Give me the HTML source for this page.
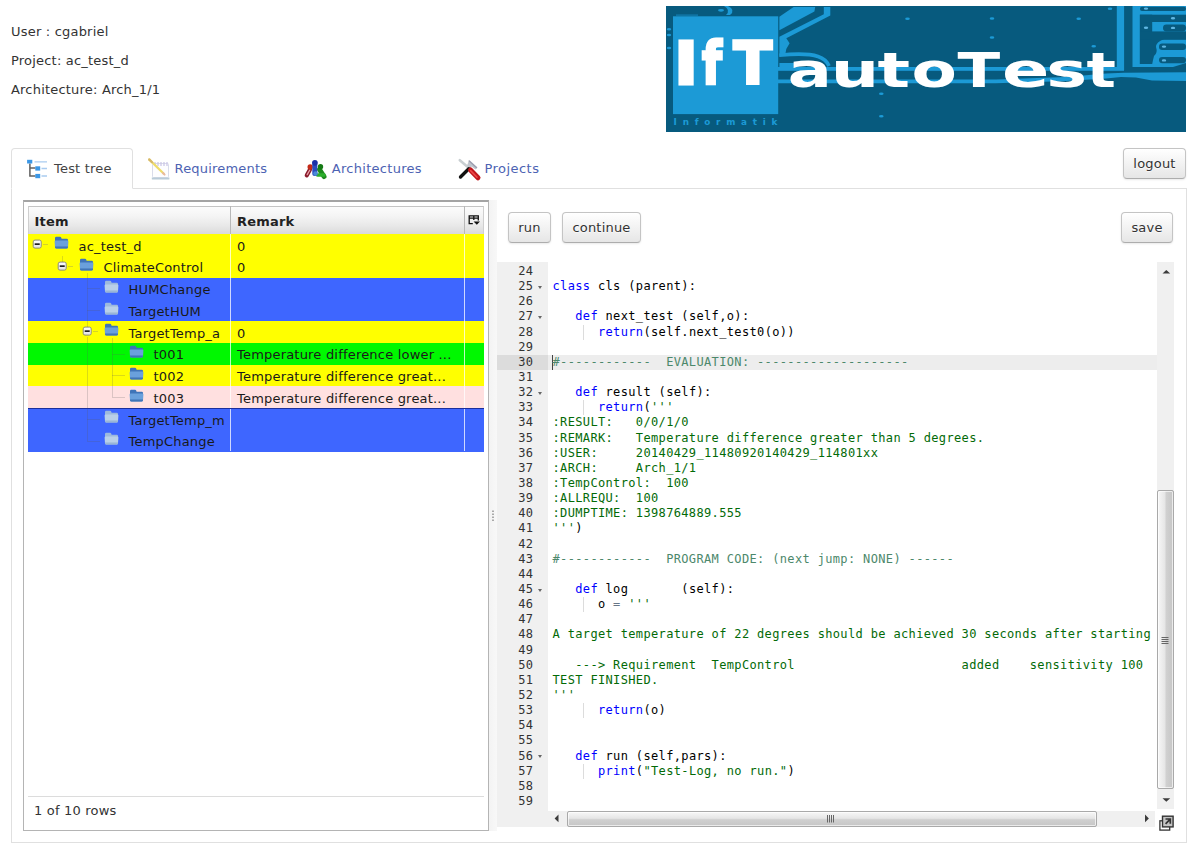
<!DOCTYPE html>
<html lang="en">
<head>
<meta charset="utf-8">
<title>IfT autoTest</title>
<style>
html,body{margin:0;padding:0;background:#fff;}
body{width:1200px;height:859px;position:relative;overflow:hidden;font-family:'DejaVu Sans', 'Liberation Sans', sans-serif;font-size:13px;letter-spacing:.2px;color:#333;}
.abs{position:absolute;}
.info{position:absolute;left:11px;white-space:nowrap;line-height:16px;color:#333;}
/* buttons */
.btn{position:absolute;box-sizing:border-box;border:1px solid #c4c4c4;border-bottom-color:#adadad;border-radius:4px;
 background:linear-gradient(#ffffff,#e6e6e6);color:#333;text-align:center;white-space:nowrap;
 box-shadow:inset 0 1px 0 rgba(255,255,255,.2),0 1px 2px rgba(0,0,0,.09);text-shadow:0 1px 1px rgba(255,255,255,.75);}
/* tabs */
.tabline{position:absolute;left:11px;top:188px;width:1176px;height:655px;box-sizing:border-box;border:1px solid #e0e0e0;}
.tab{position:absolute;top:148px;height:41px;box-sizing:border-box;white-space:nowrap;color:#4d63b3;line-height:16px;}
.tab.active{left:11px;width:122px;border:1px solid #e0e0e0;border-bottom:1px solid #fff;border-radius:4px 4px 0 0;background:#fff;color:#444;}
.tab span{position:absolute;top:12px;}
/* tree */
.treebox{position:absolute;left:23px;top:200px;width:466px;height:631px;box-sizing:border-box;border:1px solid #b4b4b4;border-top:2px solid #a4a4a4;background:#fff;}
.thead{position:absolute;left:28px;top:206px;width:456px;height:28px;background:linear-gradient(#fcfcfc 0%,#f4f4f4 35%,#e8e8e8 70%,#dadada 100%);border-top:1px solid #c4c4c4;border-left:1px solid #cfcfcf;border-right:1px solid #cfcfcf;box-sizing:border-box;}
.thead b{position:absolute;top:7px;font-weight:bold;color:#222;line-height:16px;}
.thsep{position:absolute;top:206px;width:1px;height:28px;background:#b8b8b8;}
.row{position:absolute;left:28px;width:456px;height:21.8px;}
.row .t{position:absolute;top:4.5px;line-height:16px;color:#1a1a1a;white-space:nowrap;}
.row .r{position:absolute;left:209px;top:4.5px;line-height:16px;color:#1a1a1a;white-space:nowrap;}
.vsep{position:absolute;top:234px;width:1px;height:217px;background:rgba(255,255,255,.75);}
.yl{background:#ffff00}.bl{background:#3e66ff}.gr{background:#00f800}.pk{background:#ffe0e0}
.fold{position:absolute;width:15px;height:13px;}
.status{position:absolute;left:28px;top:796px;width:456px;height:1px;background:#dcdcdc;}
/* splitter */
.split{position:absolute;left:489px;top:200px;width:8px;height:631px;background:linear-gradient(90deg,#f3f3f3,#f8f8f8);}
/* ace */
.gutter{position:absolute;left:497px;top:262px;width:51px;height:565px;background:#f0f0f0;overflow:hidden;}
.gn{position:absolute;left:0;width:36.3px;height:15.143px;line-height:15.143px;text-align:right;color:#333;font-family:'DejaVu Sans Mono', 'Liberation Mono', monospace;font-size:12px;letter-spacing:.351px;white-space:pre;padding-right:14.7px;}
.gn.act{background:#dcdcdc;}
.fd{position:absolute;left:41px;top:6.5px;width:0;height:0;border-left:2.5px solid transparent;border-right:2.5px solid transparent;border-top:3px solid #666;}
.code{position:absolute;left:548px;top:262px;width:609px;height:549px;background:#fff;overflow:hidden;font-family:'DejaVu Sans Mono', 'Liberation Mono', monospace;font-size:12px;letter-spacing:.351px;color:#000;}
.ln{position:absolute;left:4.5px;height:15.143px;line-height:15.143px;white-space:pre;}
.actl{position:absolute;left:0;width:609px;height:15.143px;background:#ededed;}
.ig{position:absolute;left:34.5px;width:1px;height:15.143px;background:#dcdcdc;}
.k{color:#0000ff}.s{color:#036a07}.c{color:#4c886b}.o{color:#687687}
</style>
</head>
<body>
<div class="info" style="top:24px">User : cgabriel</div>
<div class="info" style="top:53px">Project: ac_test_d</div>
<div class="info" style="top:82px">Architecture: Arch_1/1</div>

<!-- banner -->
<svg class="abs" style="left:666px;top:6px" width="520" height="126" viewBox="0 0 520 126">
<rect width="520" height="126" fill="#075a7e"/>
<path d="M62 0 Q70 4 64 9 L60 9 Q65 4 58 0 Z" fill="#1c9ad6"/>
<ellipse cx="55" cy="4.300" rx="3" ry="1.400" fill="#1c9ad6"/>
<rect x="10" y="8.500" width="22" height="1.200" fill="#1c9ad6" opacity=".6"/>
<ellipse cx="3" cy="23.3" rx="2.200" ry="1.300" fill="#1c9ad6"/>
<ellipse cx="3" cy="29" rx="2.200" ry="1.300" fill="#1c9ad6"/>
<ellipse cx="3" cy="42" rx="2.200" ry="1.300" fill="#1c9ad6"/>
<path d="M113.400 10.700 L127.600 0.900 H149.200 L148.400 5.400 L113.400 24.200 Z" fill="#1c9ad6"/>
<path d="M113.400 30.700 L157.800 8.300 V0.900 H164.300 V9.500 L120.300 32.300 L123.600 37.200 L120.300 42.900 L119.500 47.200 L113.400 51 Z" fill="#1c9ad6"/>
<path d="M113.400 49.300 Q140 46.500 152 50.500 Q160 53 163 60" fill="none" stroke="#1c9ad6" stroke-width="3.600"/>
<rect x="113.400" y="57" width="16" height="6" fill="#1c9ad6"/>
<rect x="112" y="61" width="346" height="3.800" fill="#1c9ad6"/>
<path d="M112 73.600 H330 L400 71 L440 67.500 L458 66.800 L520 66.300 V75 L486 74.600 L470 71.500 L455 71 L440 72.500 L400 75 L330 77.300 H112 Z" fill="#1c9ad6"/>
<ellipse cx="215.3" cy="87.7" rx="2.300" ry="1.200" fill="#1c9ad6"/>
<ellipse cx="215.3" cy="110.3" rx="2.300" ry="1.200" fill="#1c9ad6"/>
<ellipse cx="241.5" cy="12.7" rx="2.300" ry="1.200" fill="#1c9ad6"/>
<ellipse cx="326" cy="12.5" rx="2.300" ry="1.200" fill="#1c9ad6"/>
<ellipse cx="412.7" cy="12.7" rx="2.300" ry="1.200" fill="#1c9ad6"/>
<ellipse cx="326" cy="31.5" rx="2.300" ry="1.200" fill="#1c9ad6"/>
<ellipse cx="427.7" cy="40.2" rx="2.300" ry="1.200" fill="#1c9ad6"/>
<ellipse cx="444" cy="2.7" rx="2.300" ry="1.200" fill="#1c9ad6"/>
<rect x="450.800" y="0" width="7.300" height="64" fill="#1c9ad6"/>
<path d="M466.500 0 H520 V57 L507 61 H466.500 Z" fill="#1c9ad6"/>
<rect x="473.800" y="8.700" width="12.400" height="49.300" fill="#075a7e"/>
<rect x="474" y="0.800" width="46" height="4.200" rx="2" fill="#075a7e"/>
<rect x="474" y="8.700" width="46" height="7.300" fill="#075a7e"/>
<circle cx="480" cy="21.700" r="5.800" fill="#075a7e"/>
<rect x="497" y="18.600" width="23" height="6.800" rx="3.400" fill="#075a7e"/>
<rect x="474" y="25.400" width="46" height="8.400" fill="#075a7e"/>
<path d="M486 33 H498 Q490 36 490 41 Q492 47 488 50 L486 58 Z" fill="#075a7e"/>
<rect x="493" y="37.600" width="27" height="6.400" rx="3.200" fill="#075a7e"/>
<rect x="493" y="51" width="27" height="6.200" rx="3.100" fill="#075a7e"/>
<ellipse cx="480" cy="21.7" rx="2.200" ry="1.200" fill="#5fb6e2"/>
<ellipse cx="507" cy="12.3" rx="2.200" ry="1.200" fill="#5fb6e2"/>
<ellipse cx="507" cy="21.9" rx="2.200" ry="1.200" fill="#5fb6e2"/>
<ellipse cx="498" cy="40.6" rx="2.200" ry="1.200" fill="#5fb6e2"/>
<ellipse cx="498" cy="54.4" rx="2.200" ry="1.200" fill="#5fb6e2"/>
<ellipse cx="480" cy="2.6" rx="2.200" ry="1.200" fill="#5fb6e2"/>
<rect x="7" y="10.300" width="105.200" height="97.800" fill="#1c9ad6"/>
<g font-family="'DejaVu Sans','Liberation Sans',sans-serif" font-weight="bold" fill="#fff">
<text transform="matrix(1 0 0 0.5861 0 78.43)" y="0" font-size="100" stroke="#fff" stroke-width="5"><tspan x="8.23" textLength="23.79" lengthAdjust="spacingAndGlyphs">I</tspan><tspan x="36.06" textLength="19.94" lengthAdjust="spacingAndGlyphs">f</tspan><tspan x="67.63" textLength="38.66" lengthAdjust="spacingAndGlyphs">T</tspan></text>
<text transform="matrix(1 0 0 0.4874 0 80.58)" y="0" font-size="100"><tspan x="121.88" textLength="44.23" lengthAdjust="spacingAndGlyphs">a</tspan><tspan x="164.75" textLength="48.55" lengthAdjust="spacingAndGlyphs">u</tspan><tspan x="211.52" textLength="32.72" lengthAdjust="spacingAndGlyphs">t</tspan><tspan x="245.55" textLength="45.57" lengthAdjust="spacingAndGlyphs">o</tspan><tspan x="291.50" textLength="42.84" lengthAdjust="spacingAndGlyphs">T</tspan><tspan x="335.90" textLength="47.48" lengthAdjust="spacingAndGlyphs">e</tspan><tspan x="380.25" textLength="41.08" lengthAdjust="spacingAndGlyphs">s</tspan><tspan x="420.58" textLength="29.54" lengthAdjust="spacingAndGlyphs">t</tspan></text>
</g>
<text x="7.600" y="118.700" font-family="'DejaVu Sans','Liberation Sans',sans-serif" font-weight="bold" font-size="8.800" fill="#1c9ad6" textLength="104" lengthAdjust="spacing">Informatik</text>
</svg>

<div class="btn" style="left:1123px;top:148px;width:63px;height:31px;line-height:29px;">logout</div>

<!-- tabs -->
<div class="tabline"></div>
<div class="tab active"><span style="left:42px">Test tree</span></div>
<div class="tab" style="left:134px"><span style="left:40.500px;top:13px">Requirements</span></div>
<div class="tab" style="left:290px"><span style="left:41.700px;top:13px;letter-spacing:.3px">Architectures</span></div>
<div class="tab" style="left:444px"><span style="left:40.500px;top:13px;letter-spacing:.45px">Projects</span></div>


<!-- tab icons -->
<svg class="abs" style="left:26px;top:158px" width="22" height="22" viewBox="0 0 22 22">
<path d="M3.900 5.400 V17.900 H9.500 M3.900 10 H9.500" fill="none" stroke="#606060" stroke-width="1.500"/>
<rect x="1.100" y="1.800" width="5.200" height="3.700" fill="#3b97e6"/>
<rect x="9.300" y="8.300" width="4.900" height="4.300" fill="#3b97e6"/>
<rect x="9.300" y="15.900" width="4.900" height="4.300" fill="#3b97e6"/>
<path d="M8.500 3.800 H21 M15.500 10.500 H21 M15.500 18 H21" stroke="#a9cbf0" stroke-width="1.300"/>
</svg>
<svg class="abs" style="left:146px;top:156px" width="26" height="26" viewBox="0 0 26 26">
<rect x="6.500" y="7.500" width="16" height="14" rx="1" fill="#fdfdff" stroke="#d9dcea" stroke-width="1"/>
<path d="M9 6 V10 M12 6 V10 M15 6 V10 M18 6 V10 M21 6 V10" stroke="#c9c4e4" stroke-width="1.200"/>
<path d="M5.800 21.500 H23.400 V23 Q23.400 23.600 22.800 23.600 H6.400 Q5.800 23.600 5.800 23 Z" fill="#b9cbd8"/>
<path d="M3.400 3.600 L17.800 17.800" stroke="#eedc6a" stroke-width="2.200" stroke-linecap="round"/>
<path d="M3.200 3.400 L6 6.200" stroke="#d6b86a" stroke-width="2.200" stroke-linecap="round"/>
<path d="M17 17 L18.600 18.600" stroke="#e9b9a0" stroke-width="2" stroke-linecap="round"/>
</svg>
<svg class="abs" style="left:302px;top:156px" width="26" height="26" viewBox="0 0 26 26">
<path d="M8 13.500 L4.800 19.300" stroke="#8a1c2c" stroke-width="4.200" stroke-linecap="round"/>
<path d="M7.800 14 L5.200 18.600" stroke="#e8a0a8" stroke-width="1.300" stroke-linecap="round"/>
<circle cx="8.200" cy="11" r="2.700" fill="#c42a18"/>
<path d="M17.500 13.500 L22 20.500" stroke="#1d8a1d" stroke-width="5" stroke-linecap="round"/>
<path d="M15.500 19 H22" stroke="#2cae2c" stroke-width="3.600" stroke-linecap="round"/>
<circle cx="18.500" cy="10.800" r="2.700" fill="#157a15"/>
<path d="M12.800 9 V17.500" stroke="#2a4cc0" stroke-width="5" stroke-linecap="round"/>
<circle cx="12.900" cy="6.800" r="2.900" fill="#1a2fa8"/>
<circle cx="13.500" cy="17.500" r="2.300" fill="#4a8ad8"/>
</svg>
<svg class="abs" style="left:456px;top:156px" width="26" height="26" viewBox="0 0 26 26">
<path d="M3.800 4.200 L13.200 12.200" stroke="#c9cfd2" stroke-width="2.600" stroke-linecap="round"/>
<path d="M13 4.500 L21 12 L19.500 13.500 L15.500 10.500 L13.600 12.300 L11 9.600 Z" fill="#bfc5cd"/>
<path d="M13.300 5 L20.500 11.500" stroke="#9b9fb0" stroke-width="1.600" stroke-linecap="round"/>
<path d="M12.800 12.800 L4.500 21" stroke="#111" stroke-width="3.400" stroke-linecap="round"/>
<path d="M14.500 14 L22 21.800" stroke="#c0161c" stroke-width="5" stroke-linecap="round"/>
<path d="M14.600 14.600 L21 21.200" stroke="#ee4a4a" stroke-width="1.600" stroke-linecap="round"/>
</svg>

<!-- tree -->
<div class="treebox"></div>
<div class="thead"><b style="left:5.500px">Item</b><b style="left:208px">Remark</b></div>
<svg class="abs" style="left:468px;top:214px" width="13" height="13" viewBox="0 0 13 13"><path d="M1.200 1.800 H10.300 M1.200 4.200 H10.300 M1.200 1.200 V9.700 H4.800 M5.800 1.200 V6 M10.300 1.200 V6.500" fill="none" stroke="#111" stroke-width="1.300"/><path d="M5.600 7.600 H12 L8.800 10.800 Z" fill="#111"/></svg>
<div class="thsep" style="left:230px"></div>
<div class="thsep" style="left:464px"></div>
<div class="row yl" style="top:234.00px;height:22.06px"><svg class="abs" style="left:4px;top:5px" width="11" height="11" viewBox="0 0 11 11"><defs><linearGradient id="eg0" x1="0" y1="0" x2="0" y2="1"><stop offset="0" stop-color="#fff"/><stop offset="1" stop-color="#e2e2e2"/></linearGradient></defs><rect x="1.200" y="1.100" width="8" height="8" rx="1.800" fill="url(#eg0)" stroke="#8a8a80" stroke-width="1"/><rect x="2.700" y="4.300" width="5" height="1.700" fill="#222"/></svg><i class="abs" style="left:15px;top:10px;width:5px;height:1px;background:rgba(120,120,120,.3)"></i><svg class="fold" style="left:26px;top:2.3px" viewBox="0 0 15 13"><path d="M1 2.2 Q1 0.8 2.2 0.8 H6 Q7 0.8 7.3 1.8 L7.6 2.8 H12.8 Q14 2.8 14 4 V11 Q14 12.2 12.8 12.2 H2.2 Q1 12.2 1 11 Z" fill="#3f74b8"/><path d="M0.6 5.6 Q0.6 4.6 1.6 4.6 H13.4 Q14.4 4.6 14.4 5.6 L14 11.2 Q14 12.4 12.8 12.4 H2.2 Q1 12.4 1 11.2 Z" fill="#6aa0dc"/><path d="M1 11.3 Q1 12.4 2.2 12.4 H12.8 Q14 12.4 14 11.3 V10.6 H1 Z" fill="#2f62a6" opacity=".7"/></svg><span class="t" style="left:50.5px">ac_test_d</span><span class="r">0</span></div>
<div class="row yl" style="top:255.76px;height:22.06px"><svg class="abs" style="left:29px;top:5px" width="11" height="11" viewBox="0 0 11 11"><defs><linearGradient id="eg1" x1="0" y1="0" x2="0" y2="1"><stop offset="0" stop-color="#fff"/><stop offset="1" stop-color="#e2e2e2"/></linearGradient></defs><rect x="1.200" y="1.100" width="8" height="8" rx="1.800" fill="url(#eg1)" stroke="#8a8a80" stroke-width="1"/><rect x="2.700" y="4.300" width="5" height="1.700" fill="#222"/></svg><i class="abs" style="left:40px;top:10px;width:5px;height:1px;background:rgba(120,120,120,.3)"></i><svg class="fold" style="left:51px;top:2.3px" viewBox="0 0 15 13"><path d="M1 2.2 Q1 0.8 2.2 0.8 H6 Q7 0.8 7.3 1.8 L7.6 2.8 H12.8 Q14 2.8 14 4 V11 Q14 12.2 12.8 12.2 H2.2 Q1 12.2 1 11 Z" fill="#3f74b8"/><path d="M0.6 5.6 Q0.6 4.6 1.6 4.6 H13.4 Q14.4 4.6 14.4 5.6 L14 11.2 Q14 12.4 12.8 12.4 H2.2 Q1 12.4 1 11.2 Z" fill="#6aa0dc"/><path d="M1 11.3 Q1 12.4 2.2 12.4 H12.8 Q14 12.4 14 11.3 V10.6 H1 Z" fill="#2f62a6" opacity=".7"/></svg><span class="t" style="left:75.5px">ClimateControl</span><span class="r">0</span></div>
<div class="row bl" style="top:277.52px;height:22.06px"><svg class="fold" style="left:76px;top:2.3px" viewBox="0 0 15 13"><path d="M1 2.2 Q1 0.8 2.2 0.8 H6 Q7 0.8 7.3 1.8 L7.6 2.8 H12.8 Q14 2.8 14 4 V11 Q14 12.2 12.8 12.2 H2.2 Q1 12.2 1 11 Z" fill="#9db9dc"/><path d="M0.6 5.6 Q0.6 4.6 1.6 4.6 H13.4 Q14.4 4.6 14.4 5.6 L14 11.2 Q14 12.4 12.8 12.4 H2.2 Q1 12.4 1 11.2 Z" fill="#b9cfe8"/><path d="M1 11.3 Q1 12.4 2.2 12.4 H12.8 Q14 12.4 14 11.3 V10.6 H1 Z" fill="#8aa9d0" opacity=".7"/></svg><span class="t" style="left:100.5px">HUMChange</span></div>
<div class="row bl" style="top:299.28px;height:22.06px"><svg class="fold" style="left:76px;top:2.3px" viewBox="0 0 15 13"><path d="M1 2.2 Q1 0.8 2.2 0.8 H6 Q7 0.8 7.3 1.8 L7.6 2.8 H12.8 Q14 2.8 14 4 V11 Q14 12.2 12.8 12.2 H2.2 Q1 12.2 1 11 Z" fill="#9db9dc"/><path d="M0.6 5.6 Q0.6 4.6 1.6 4.6 H13.4 Q14.4 4.6 14.4 5.6 L14 11.2 Q14 12.4 12.8 12.4 H2.2 Q1 12.4 1 11.2 Z" fill="#b9cfe8"/><path d="M1 11.3 Q1 12.4 2.2 12.4 H12.8 Q14 12.4 14 11.3 V10.6 H1 Z" fill="#8aa9d0" opacity=".7"/></svg><span class="t" style="left:100.5px">TargetHUM</span></div>
<div class="row yl" style="top:321.04px;height:22.06px"><svg class="abs" style="left:54px;top:5px" width="11" height="11" viewBox="0 0 11 11"><defs><linearGradient id="eg4" x1="0" y1="0" x2="0" y2="1"><stop offset="0" stop-color="#fff"/><stop offset="1" stop-color="#e2e2e2"/></linearGradient></defs><rect x="1.200" y="1.100" width="8" height="8" rx="1.800" fill="url(#eg4)" stroke="#8a8a80" stroke-width="1"/><rect x="2.700" y="4.300" width="5" height="1.700" fill="#222"/></svg><i class="abs" style="left:65px;top:10px;width:5px;height:1px;background:rgba(120,120,120,.3)"></i><svg class="fold" style="left:76px;top:2.3px" viewBox="0 0 15 13"><path d="M1 2.2 Q1 0.8 2.2 0.8 H6 Q7 0.8 7.3 1.8 L7.6 2.8 H12.8 Q14 2.8 14 4 V11 Q14 12.2 12.8 12.2 H2.2 Q1 12.2 1 11 Z" fill="#3f74b8"/><path d="M0.6 5.6 Q0.6 4.6 1.6 4.6 H13.4 Q14.4 4.6 14.4 5.6 L14 11.2 Q14 12.4 12.8 12.4 H2.2 Q1 12.4 1 11.2 Z" fill="#6aa0dc"/><path d="M1 11.3 Q1 12.4 2.2 12.4 H12.8 Q14 12.4 14 11.3 V10.6 H1 Z" fill="#2f62a6" opacity=".7"/></svg><span class="t" style="left:100.5px">TargetTemp_a</span><span class="r">0</span></div>
<div class="row gr" style="top:342.80px;height:22.06px"><svg class="fold" style="left:101px;top:2.3px" viewBox="0 0 15 13"><path d="M1 2.2 Q1 0.8 2.2 0.8 H6 Q7 0.8 7.3 1.8 L7.6 2.8 H12.8 Q14 2.8 14 4 V11 Q14 12.2 12.8 12.2 H2.2 Q1 12.2 1 11 Z" fill="#3f74b8"/><path d="M0.6 5.6 Q0.6 4.6 1.6 4.6 H13.4 Q14.4 4.6 14.4 5.6 L14 11.2 Q14 12.4 12.8 12.4 H2.2 Q1 12.4 1 11.2 Z" fill="#6aa0dc"/><path d="M1 11.3 Q1 12.4 2.2 12.4 H12.8 Q14 12.4 14 11.3 V10.6 H1 Z" fill="#2f62a6" opacity=".7"/></svg><span class="t" style="left:125.5px">t001</span><span class="r">Temperature difference lower ...</span></div>
<div class="row yl" style="top:364.56px;height:22.06px"><svg class="fold" style="left:101px;top:2.3px" viewBox="0 0 15 13"><path d="M1 2.2 Q1 0.8 2.2 0.8 H6 Q7 0.8 7.3 1.8 L7.6 2.8 H12.8 Q14 2.8 14 4 V11 Q14 12.2 12.8 12.2 H2.2 Q1 12.2 1 11 Z" fill="#3f74b8"/><path d="M0.6 5.6 Q0.6 4.6 1.6 4.6 H13.4 Q14.4 4.6 14.4 5.6 L14 11.2 Q14 12.4 12.8 12.4 H2.2 Q1 12.4 1 11.2 Z" fill="#6aa0dc"/><path d="M1 11.3 Q1 12.4 2.2 12.4 H12.8 Q14 12.4 14 11.3 V10.6 H1 Z" fill="#2f62a6" opacity=".7"/></svg><span class="t" style="left:125.5px">t002</span><span class="r">Temperature difference great...</span></div>
<div class="row pk" style="top:386.32px;height:22.06px"><svg class="fold" style="left:101px;top:2.3px" viewBox="0 0 15 13"><path d="M1 2.2 Q1 0.8 2.2 0.8 H6 Q7 0.8 7.3 1.8 L7.6 2.8 H12.8 Q14 2.8 14 4 V11 Q14 12.2 12.8 12.2 H2.2 Q1 12.2 1 11 Z" fill="#3f74b8"/><path d="M0.6 5.6 Q0.6 4.6 1.6 4.6 H13.4 Q14.4 4.6 14.4 5.6 L14 11.2 Q14 12.4 12.8 12.4 H2.2 Q1 12.4 1 11.2 Z" fill="#6aa0dc"/><path d="M1 11.3 Q1 12.4 2.2 12.4 H12.8 Q14 12.4 14 11.3 V10.6 H1 Z" fill="#2f62a6" opacity=".7"/></svg><span class="t" style="left:125.5px">t003</span><span class="r">Temperature difference great...</span></div>
<div class="row bl" style="top:408.08px;height:22.06px"><svg class="fold" style="left:76px;top:2.3px" viewBox="0 0 15 13"><path d="M1 2.2 Q1 0.8 2.2 0.8 H6 Q7 0.8 7.3 1.8 L7.6 2.8 H12.8 Q14 2.8 14 4 V11 Q14 12.2 12.8 12.2 H2.2 Q1 12.2 1 11 Z" fill="#9db9dc"/><path d="M0.6 5.6 Q0.6 4.6 1.6 4.6 H13.4 Q14.4 4.6 14.4 5.6 L14 11.2 Q14 12.4 12.8 12.4 H2.2 Q1 12.4 1 11.2 Z" fill="#b9cfe8"/><path d="M1 11.3 Q1 12.4 2.2 12.4 H12.8 Q14 12.4 14 11.3 V10.6 H1 Z" fill="#8aa9d0" opacity=".7"/></svg><span class="t" style="left:100.5px">TargetTemp_m</span></div>
<div class="row bl" style="top:429.84px;height:22.06px"><svg class="fold" style="left:76px;top:2.3px" viewBox="0 0 15 13"><path d="M1 2.2 Q1 0.8 2.2 0.8 H6 Q7 0.8 7.3 1.8 L7.6 2.8 H12.8 Q14 2.8 14 4 V11 Q14 12.2 12.8 12.2 H2.2 Q1 12.2 1 11 Z" fill="#9db9dc"/><path d="M0.6 5.6 Q0.6 4.6 1.6 4.6 H13.4 Q14.4 4.6 14.4 5.6 L14 11.2 Q14 12.4 12.8 12.4 H2.2 Q1 12.4 1 11.2 Z" fill="#b9cfe8"/><path d="M1 11.3 Q1 12.4 2.2 12.4 H12.8 Q14 12.4 14 11.3 V10.6 H1 Z" fill="#8aa9d0" opacity=".7"/></svg><span class="t" style="left:100.5px">TempChange</span></div>
<i class="abs" style="left:62px;top:255.6px;width:1px;height:6.0px;background:rgba(90,90,90,.22)"></i>
<i class="abs" style="left:87px;top:272.6px;width:1px;height:54.3px;background:rgba(90,90,90,.22)"></i>
<i class="abs" style="left:87px;top:336.9px;width:1px;height:103.8px;background:rgba(90,90,90,.22)"></i>
<i class="abs" style="left:87px;top:288.4px;width:13px;height:1px;background:rgba(90,90,90,.22)"></i>
<i class="abs" style="left:87px;top:310.2px;width:13px;height:1px;background:rgba(90,90,90,.22)"></i>
<i class="abs" style="left:87px;top:419.0px;width:13px;height:1px;background:rgba(90,90,90,.22)"></i>
<i class="abs" style="left:87px;top:440.7px;width:13px;height:1px;background:rgba(90,90,90,.22)"></i>
<i class="abs" style="left:112px;top:337.9px;width:1px;height:59.3px;background:rgba(90,90,90,.22)"></i>
<i class="abs" style="left:112px;top:353.7px;width:13px;height:1px;background:rgba(90,90,90,.22)"></i>
<i class="abs" style="left:112px;top:375.4px;width:13px;height:1px;background:rgba(90,90,90,.22)"></i>
<i class="abs" style="left:112px;top:397.2px;width:13px;height:1px;background:rgba(90,90,90,.22)"></i>
<div class="vsep" style="left:230px"></div>
<div class="vsep" style="left:464px"></div>
<div class="abs" style="left:28px;top:407.500px;width:456px;height:1.500px;background:#1c2f9c"></div>
<div class="status"></div>
<div class="abs" style="left:34px;top:803px;line-height:16px;color:#333">1 of 10 rows</div>

<div class="split"></div>
<svg class="abs" style="left:490px;top:508px" width="6" height="14" viewBox="0 0 6 14"><path d="M3 2.500V4M3 5.500V7M3 8.500V10M3 11.500V13" stroke="#8a8a8a" stroke-width="1.400"/></svg>

<!-- buttons -->
<div class="btn" style="left:508px;top:212px;width:43px;height:31px;line-height:29px;">run</div>
<div class="btn" style="left:562px;top:212px;width:79px;height:31px;line-height:29px;">continue</div>
<div class="btn" style="left:1121px;top:212px;width:52px;height:31px;line-height:29px;">save</div>

<!-- editor -->
<div class="gutter">
<div class="gn" style="top:2.00px">24</div>
<div class="gn" style="top:17.14px">25<i class="fd"></i></div>
<div class="gn" style="top:32.29px">26</div>
<div class="gn" style="top:47.43px">27<i class="fd"></i></div>
<div class="gn" style="top:62.57px">28</div>
<div class="gn" style="top:77.72px">29</div>
<div class="gn act" style="top:92.86px">30</div>
<div class="gn" style="top:108.00px">31</div>
<div class="gn" style="top:123.14px">32<i class="fd"></i></div>
<div class="gn" style="top:138.29px">33</div>
<div class="gn" style="top:153.43px">34</div>
<div class="gn" style="top:168.57px">35</div>
<div class="gn" style="top:183.72px">36</div>
<div class="gn" style="top:198.86px">37</div>
<div class="gn" style="top:214.00px">38</div>
<div class="gn" style="top:229.15px">39</div>
<div class="gn" style="top:244.29px">40</div>
<div class="gn" style="top:259.43px">41</div>
<div class="gn" style="top:274.57px">42</div>
<div class="gn" style="top:289.72px">43</div>
<div class="gn" style="top:304.86px">44</div>
<div class="gn" style="top:320.00px">45<i class="fd"></i></div>
<div class="gn" style="top:335.15px">46</div>
<div class="gn" style="top:350.29px">47</div>
<div class="gn" style="top:365.43px">48</div>
<div class="gn" style="top:380.58px">49</div>
<div class="gn" style="top:395.72px">50</div>
<div class="gn" style="top:410.86px">51</div>
<div class="gn" style="top:426.00px">52</div>
<div class="gn" style="top:441.15px">53</div>
<div class="gn" style="top:456.29px">54</div>
<div class="gn" style="top:471.43px">55</div>
<div class="gn" style="top:486.58px">56<i class="fd"></i></div>
<div class="gn" style="top:501.72px">57</div>
<div class="gn" style="top:516.86px">58</div>
<div class="gn" style="top:532.00px">59</div>
</div>
<div class="code">
<div class="actl" style="top:92.86px"></div>
<div class="abs" style="left:3.500px;top:92.86px;width:1.500px;height:15.143px;background:#444"></div>
<div class="ln" style="top:2.00px"></div>
<div class="ln" style="top:17.14px"><span class="k">class</span> cls (parent):</div>
<div class="ln" style="top:32.29px"></div>
<div class="ln" style="top:47.43px">   <span class="k">def</span> next_test (self,o):</div>
<div class="ln" style="top:62.57px">      <span class="k">return</span>(self.next_test0(o))</div>
<div class="ig" style="top:62.57px"></div>
<div class="ln" style="top:77.72px"></div>
<div class="ln" style="top:92.86px"><span class="c">#------------  EVALUATION: --------------------</span></div>
<div class="ln" style="top:108.00px"></div>
<div class="ln" style="top:123.14px">   <span class="k">def</span> result (self):</div>
<div class="ln" style="top:138.29px">      <span class="k">return</span>(<span class="s">&#x27;&#x27;&#x27;</span></div>
<div class="ig" style="top:138.29px"></div>
<div class="ln" style="top:153.43px"><span class="s">:RESULT:   0/0/1/0</span></div>
<div class="ln" style="top:168.57px"><span class="s">:REMARK:   Temperature difference greater than 5 degrees.</span></div>
<div class="ln" style="top:183.72px"><span class="s">:USER:     20140429_11480920140429_114801xx</span></div>
<div class="ln" style="top:198.86px"><span class="s">:ARCH:     Arch_1/1</span></div>
<div class="ln" style="top:214.00px"><span class="s">:TempControl:  100</span></div>
<div class="ln" style="top:229.15px"><span class="s">:ALLREQU:  100</span></div>
<div class="ln" style="top:244.29px"><span class="s">:DUMPTIME: 1398764889.555</span></div>
<div class="ln" style="top:259.43px"><span class="s">&#x27;&#x27;&#x27;</span>)</div>
<div class="ln" style="top:274.57px"></div>
<div class="ln" style="top:289.72px"><span class="c">#------------  PROGRAM CODE: (next jump: NONE) ------</span></div>
<div class="ln" style="top:304.86px"></div>
<div class="ln" style="top:320.00px">   <span class="k">def</span> log       (self):</div>
<div class="ln" style="top:335.15px">      o <span class="o">=</span> <span class="s">&#x27;&#x27;&#x27;</span></div>
<div class="ig" style="top:335.15px"></div>
<div class="ln" style="top:350.29px"></div>
<div class="ln" style="top:365.43px"><span class="s">A target temperature of 22 degrees should be achieved 30 seconds after starting</span></div>
<div class="ln" style="top:380.58px"></div>
<div class="ln" style="top:395.72px"><span class="s">   ---&gt; Requirement  TempControl                      added    sensitivity 100</span></div>
<div class="ln" style="top:410.86px"><span class="s">TEST FINISHED.</span></div>
<div class="ln" style="top:426.00px"><span class="s">&#x27;&#x27;&#x27;</span></div>
<div class="ln" style="top:441.15px">      <span class="k">return</span>(o)</div>
<div class="ig" style="top:441.15px"></div>
<div class="ln" style="top:456.29px"></div>
<div class="ln" style="top:471.43px"></div>
<div class="ln" style="top:486.58px">   <span class="k">def</span> run (self,pars):</div>
<div class="ln" style="top:501.72px">      <span class="k">print</span>(<span class="s">&quot;Test-Log, no run.&quot;</span>)</div>
<div class="ig" style="top:501.72px"></div>
<div class="ln" style="top:516.86px"></div>
<div class="ln" style="top:532.00px"></div>
</div>

<div class="abs" style="left:1157px;top:262px;width:17.300px;height:546.500px;background:#f0f0f0"></div>
<div class="abs" style="left:1157px;top:490px;width:17px;height:299px;box-sizing:border-box;border:1px solid #a9a9a9;border-radius:2px;background:linear-gradient(90deg,#f7f7f7 0%,#e6e6e6 45%,#d0d0d0 55%,#c6c6c6 100%);box-shadow:inset 0 0 0 1px rgba(255,255,255,.65)"></div>
<svg class="abs" style="left:1157px;top:262px" width="18" height="18" viewBox="0 0 18 18"><path d="M5.500 11.600 L9.300 8 L13.200 11.600 Z" fill="#3c3c3c"/></svg>
<svg class="abs" style="left:1157px;top:791px" width="18" height="18" viewBox="0 0 18 18"><path d="M5.500 7.300 L9.300 10.800 L13.200 7.300 Z" fill="#3c3c3c"/></svg>
<svg class="abs" style="left:1160px;top:635.500px" width="10" height="10" viewBox="0 0 10 10"><path d="M1.500 1.500H8.500M1.500 3.500H8.500M1.500 5.500H8.500M1.500 7.500H8.500" stroke="#666" stroke-width="1"/></svg>

<div class="abs" style="left:548px;top:810.500px;width:606.500px;height:16px;background:#f0f0f0"></div>
<div class="abs" style="left:567px;top:811px;width:530px;height:16px;box-sizing:border-box;border:1px solid #a9a9a9;border-radius:2px;background:linear-gradient(#f7f7f7 0%,#e6e6e6 45%,#d0d0d0 55%,#c6c6c6 100%);box-shadow:inset 0 0 0 1px rgba(255,255,255,.65)"></div>
<svg class="abs" style="left:548px;top:810px" width="18" height="18" viewBox="0 0 18 18"><path d="M10.500 4.600 L6.600 8.400 L10.500 12.200 Z" fill="#3c3c3c"/></svg>
<svg class="abs" style="left:1138px;top:810px" width="18" height="18" viewBox="0 0 18 18"><path d="M7 4.600 L10.900 8.400 L7 12.200 Z" fill="#3c3c3c"/></svg>
<svg class="abs" style="left:826px;top:814px" width="10" height="10" viewBox="0 0 10 10"><path d="M1.500 1V8.500M3.500 1V8.500M5.500 1V8.500M7.500 1V8.500" stroke="#666" stroke-width="1"/></svg>
<svg class="abs" style="left:1158px;top:814px" width="18" height="18" viewBox="0 0 18 18"><rect x="1.900" y="6.800" width="9.800" height="9.300" fill="#fff" stroke="#333" stroke-width="1.300"/><rect x="4.500" y="2.200" width="10.600" height="10.700" fill="#c4c4c4" stroke="#333" stroke-width="1.400"/><path d="M7.500 5 H12.300 V9.800 M12 5.300 L7.600 9.800" fill="none" stroke="#333" stroke-width="1.700"/></svg>

</body>
</html>
